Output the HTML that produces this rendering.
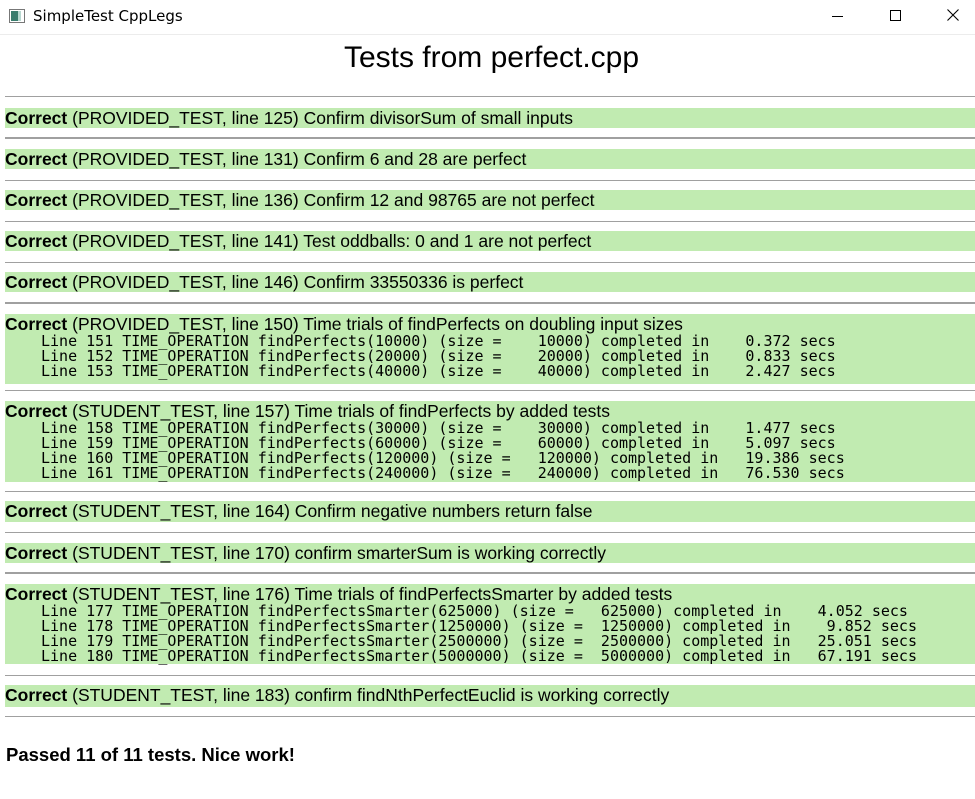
<!DOCTYPE html>
<html><head><meta charset="utf-8"><style>
body{margin:0;width:975px;height:799px;background:#fff;position:relative;overflow:hidden;font-family:"Liberation Sans",Arial,sans-serif;color:#000}
.tb{position:absolute;left:0;top:0;width:975px;height:34px;border-bottom:1px solid #ececec;background:#fff}
.tt{position:absolute;left:33px;top:7px;font-size:15px;font-family:"DejaVu Sans","Liberation Sans",sans-serif}
.hr{position:absolute;left:5px;width:970px;height:1px;background:#a0a0a0}
.hr.d{height:2px;background:#a0a0a0}
.b{position:absolute;left:5px;width:970px;background:#c1ebb1}
.h{font-size:17.5px;line-height:20px;height:20px;white-space:pre}
.m{font-family:"DejaVu Sans Mono","Liberation Mono",monospace;font-size:15px;line-height:15px;white-space:pre;padding-left:36px}
</style></head><body>
<div class="tb">
<svg style="position:absolute;left:9px;top:9px" width="16" height="14"><rect x="0.5" y="0.5" width="15" height="13" fill="#fff" stroke="#777"/><rect x="2" y="2" width="7" height="10" fill="#3a7d6e"/><rect x="9" y="2" width="3" height="10" fill="#b8d8d0"/></svg>
<div class="tt">SimpleTest CppLegs</div>
<div style="position:absolute;left:832px;top:16px;width:11px;height:1px;background:#000"></div>
<div style="position:absolute;left:890px;top:10px;width:9px;height:9px;border:1px solid #000"></div>
<svg style="position:absolute;left:947px;top:9px" width="12" height="12"><path d="M0.5 0.5L11.5 11.5M11.5 0.5L0.5 11.5" stroke="#000" stroke-width="1.1"/></svg>
</div>
<div style="position:absolute;left:0;width:975px;top:40px;text-align:center;font-size:30px;line-height:36px;padding-left:8px;box-sizing:border-box">Tests from perfect.cpp</div>

<div class="hr" style="top:96px"></div>
<div class="b" style="top:108px;height:20px"><div class="h"><b>Correct</b> (PROVIDED_TEST, line 125) Confirm divisorSum of small inputs</div></div>
<div class="hr d" style="top:137px"></div>
<div class="b" style="top:149px;height:20px"><div class="h"><b>Correct</b> (PROVIDED_TEST, line 131) Confirm 6 and 28 are perfect</div></div>
<div class="hr" style="top:180px"></div>
<div class="b" style="top:190px;height:20px"><div class="h"><b>Correct</b> (PROVIDED_TEST, line 136) Confirm 12 and 98765 are not perfect</div></div>
<div class="hr" style="top:221px"></div>
<div class="b" style="top:231px;height:20px"><div class="h"><b>Correct</b> (PROVIDED_TEST, line 141) Test oddballs: 0 and 1 are not perfect</div></div>
<div class="hr" style="top:262px"></div>
<div class="b" style="top:272px;height:20px"><div class="h"><b>Correct</b> (PROVIDED_TEST, line 146) Confirm 33550336 is perfect</div></div>
<div class="hr d" style="top:302px"></div>
<div class="b" style="top:314px;height:70px"><div class="h"><b>Correct</b> (PROVIDED_TEST, line 150) Time trials of findPerfects on doubling input sizes</div><div class="m">Line 151 TIME_OPERATION findPerfects(10000) (size =    10000) completed in    0.372 secs
Line 152 TIME_OPERATION findPerfects(20000) (size =    20000) completed in    0.833 secs
Line 153 TIME_OPERATION findPerfects(40000) (size =    40000) completed in    2.427 secs</div></div>
<div class="hr" style="top:390px"></div>
<div class="b" style="top:401px;height:81px"><div class="h"><b>Correct</b> (STUDENT_TEST, line 157) Time trials of findPerfects by added tests</div><div class="m">Line 158 TIME_OPERATION findPerfects(30000) (size =    30000) completed in    1.477 secs
Line 159 TIME_OPERATION findPerfects(60000) (size =    60000) completed in    5.097 secs
Line 160 TIME_OPERATION findPerfects(120000) (size =   120000) completed in   19.386 secs
Line 161 TIME_OPERATION findPerfects(240000) (size =   240000) completed in   76.530 secs</div></div>
<div class="hr" style="top:491px"></div>
<div class="b" style="top:501px;height:21px"><div class="h"><b>Correct</b> (STUDENT_TEST, line 164) Confirm negative numbers return false</div></div>
<div class="hr" style="top:532px"></div>
<div class="b" style="top:543px;height:20px"><div class="h"><b>Correct</b> (STUDENT_TEST, line 170) confirm smarterSum is working correctly</div></div>
<div class="hr d" style="top:572px"></div>
<div class="b" style="top:584px;height:80px"><div class="h"><b>Correct</b> (STUDENT_TEST, line 176) Time trials of findPerfectsSmarter by added tests</div><div class="m">Line 177 TIME_OPERATION findPerfectsSmarter(625000) (size =   625000) completed in    4.052 secs
Line 178 TIME_OPERATION findPerfectsSmarter(1250000) (size =  1250000) completed in    9.852 secs
Line 179 TIME_OPERATION findPerfectsSmarter(2500000) (size =  2500000) completed in   25.051 secs
Line 180 TIME_OPERATION findPerfectsSmarter(5000000) (size =  5000000) completed in   67.191 secs</div></div>
<div class="hr" style="top:675px"></div>
<div class="b" style="top:685px;height:22px"><div class="h" style="line-height:21px"><b>Correct</b> (STUDENT_TEST, line 183) confirm findNthPerfectEuclid is working correctly</div></div>
<div class="hr" style="top:716px"></div>
<div style="position:absolute;left:6px;top:744px;font-size:18.5px;font-weight:bold;font-family:'Liberation Sans',Arial,sans-serif">Passed 11 of 11 tests. Nice work!</div>
</body></html>
